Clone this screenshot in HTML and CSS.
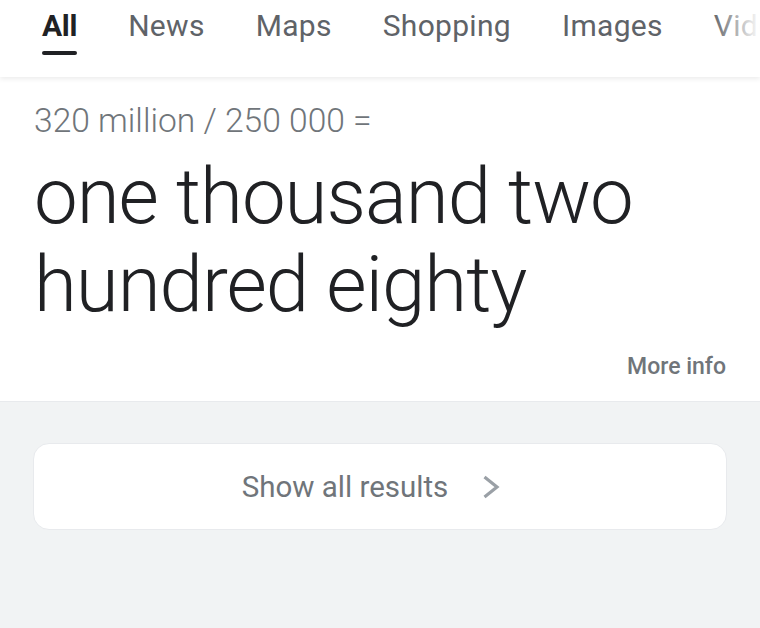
FILE: index.html
```html
<!DOCTYPE html>
<html>
<head>
<meta charset="utf-8">
<link rel="stylesheet" href="styles.css">
</head>
<body>
<div class="page">
  <nav class="tabs">
    <a class="tab active">All</a>
    <a class="tab">News</a>
    <a class="tab">Maps</a>
    <a class="tab">Shopping</a>
    <a class="tab">Images</a>
    <a class="tab">Videos</a>
    <div class="fade"></div>
  </nav>
  <section class="answer">
    <div class="equation">320 million / 250 000 =</div>
    <div class="result">one thousand two hundred eighty</div>
    <div class="more-row"><a class="more-info">More info</a></div>
  </section>
  <section class="footer">
    <a class="show-all">
      <span class="show-label">Show all results</span>
      <svg class="chev" width="18" height="24" viewBox="0 0 18 24"><path d="M2.5 2 L15 12 L2.5 22" fill="none" stroke="#9aa0a6" stroke-width="3.2"/></svg>
    </a>
  </section>
</div>
</body>
</html>
```

FILE: styles.css
```css
html, body {
  margin: 0;
  padding: 0;
  background: #f1f3f4;
  font-family: Roboto, "Liberation Sans", sans-serif;
}
.page {
  width: 760px;
  height: 628px;
  overflow: hidden;
  display: flex;
  flex-direction: column;
}
.tabs {
  position: relative;
  z-index: 1;
  height: 77px;
  flex: none;
  background: #fff;
  display: flex;
  padding-left: 16.5px;
  white-space: nowrap;
  overflow: hidden;
  box-shadow: 0 2px 5px rgba(0,0,0,0.08);
}
.tab {
  position: relative;
  padding: 8px 25.5px 0;
  font-size: 30px;
  letter-spacing: 0.3px;
  line-height: 36px;
  color: #5f6368;
}
.tab.active {
  color: #202124;
  font-weight: 700;
  letter-spacing: -0.3px;
}
.tab.active::after {
  content: "";
  position: absolute;
  left: 25.5px;
  right: 25.5px;
  top: 51px;
  height: 4px;
  border-radius: 2px;
  background: #202124;
}
.fade {
  position: absolute;
  right: 0;
  top: 0;
  width: 48px;
  height: 100%;
  background: linear-gradient(to right, rgba(255,255,255,0), #fff);
}
.answer {
  background: #fff;
  padding: 24px 34px 0;
  height: 325px;
  box-sizing: border-box;
  border-bottom: 1px solid #e8eaed;
  flex: none;
}
.equation {
  font-size: 33.6px;
  line-height: 40px;
  font-weight: 300;
  color: #70757a;
}
.result {
  margin-top: 12px;
  font-size: 78px;
  letter-spacing: -1px;
  line-height: 88px;
  font-weight: 300;
  color: #202124;
  width: 660px;
}
.more-row {
  display: flex;
  justify-content: flex-end;
  margin-top: 24px;
}
.more-info {
  font-size: 23px;
  font-weight: 500;
  color: #70757a;
  line-height: 28px;
}
.footer {
  flex: 1;
  background: #f1f3f4;
  padding: 41px 33px 0;
}
.show-all {
  height: 87px;
  box-sizing: border-box;
  background: #fff;
  border: 1px solid #e8eaed;
  border-radius: 16px;
  display: flex;
  align-items: center;
  justify-content: center;
  gap: 34px;
  padding-right: 18px;
}
.show-label {
  font-size: 29.5px;
  color: #70757a;
}
.chev {
  display: block;
}
```
